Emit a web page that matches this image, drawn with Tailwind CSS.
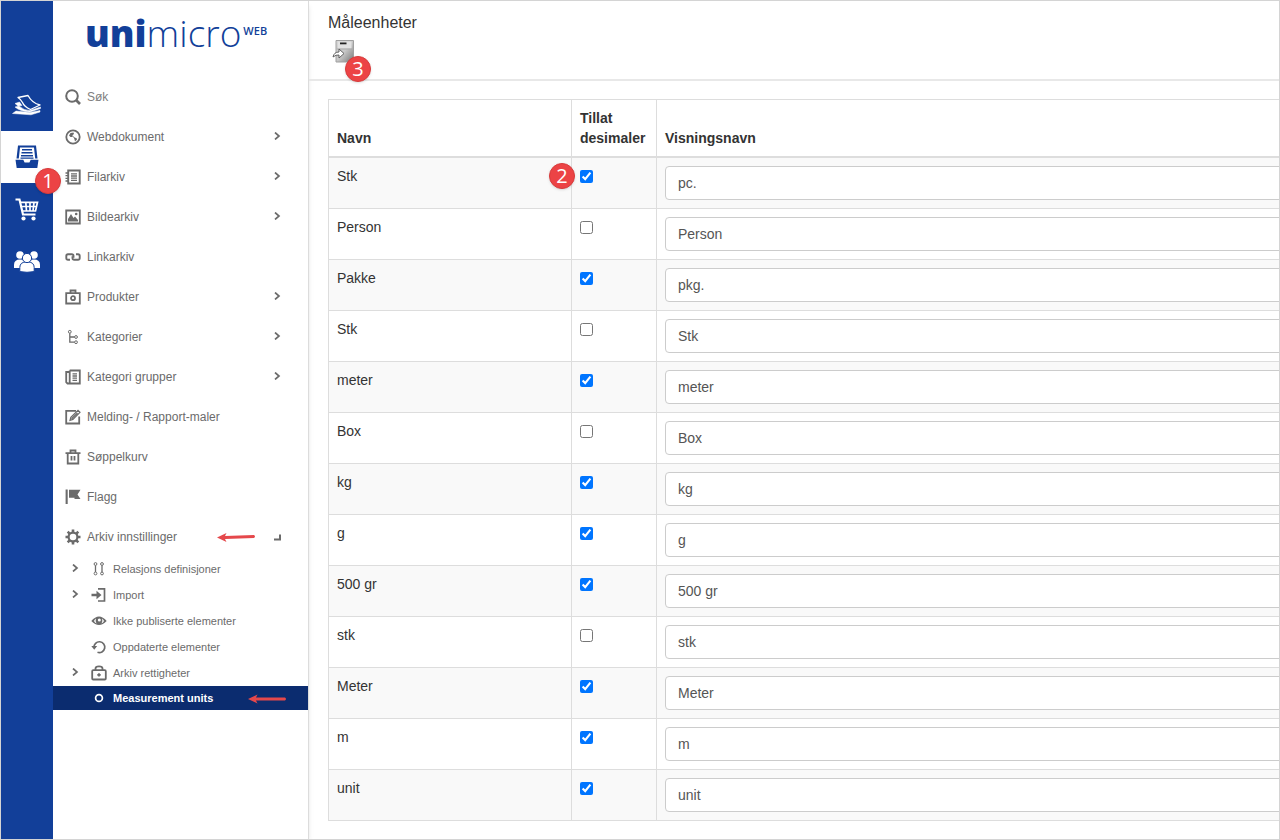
<!DOCTYPE html>
<html lang="no">
<head>
<meta charset="utf-8">
<meta name="viewport" content="width=device-width, initial-scale=1">
<title>Måleenheter</title>
<script src="https://cdn.jsdelivr.net/npm/@tailwindcss/browser@4"></script>
</head>
<body class="bg-white font-['Liberation_Sans',Arial,sans-serif] text-[#333]">
<div class="flex h-screen overflow-hidden border border-[#d4d4d4]">

  <!-- Module rail -->
  <nav class="relative z-10 flex w-13 shrink-0 flex-col bg-[#123f99] pt-[78px] text-white" aria-label="Moduler">
    <a href="#" aria-label="Sider" class="flex h-13 items-center justify-center">
      <svg class="size-8" viewBox="0 0 32 32" fill="none" stroke="currentColor" stroke-width="1.3" stroke-linejoin="round">
        <path d="M1.500 24.500 5 22 19 23.500 29 21.500V23L20 25.800Z" fill="currentColor" stroke-width=".5"/>
        <path d="M4 18 8 17Q13 21.500 19 21.500L29.500 18V19.500L19 23Q9 22.500 4 18Z" fill="currentColor" stroke-width=".5"/>
        <path d="M4 14.500 8.500 13 11 16.500 7 17Z" fill="currentColor" stroke-width=".5"/>
        <path d="M7 8.500 17 6.500Q21 14 29 16L19.500 20.500Q13 17.500 11.500 13.500 10 10.500 7 8.500Z"/>
      </svg>
    </a>
    <a href="#" aria-label="Arkiv" class="relative flex h-13 items-center justify-center bg-white text-[#123f99]">
      <svg class="size-8" viewBox="0 0 32 32" fill="currentColor">
        <path d="M7 4.500h18l1.500 13h-2.300L23 6.500H9L7.800 17.500H5.500Z"/>
        <path d="M11 8h10v1.600H11zM10.500 11h11v1.600h-11zM10 13.900h12v1.600H10zM9.500 16.600h13v1.200h-13z"/>
        <path d="M4.500 18.800h7.800l1.300 2.700h4.800l1.300-2.700h7.800L26.300 27H5.700Z"/>
      </svg>
      <span class="absolute top-[37px] left-[34px] flex size-[26px] items-center justify-center rounded-full border border-[#d83a3a] bg-[#ec4345] font-['Open_Sans',sans-serif] text-xl leading-none text-white shadow">1</span>
    </a>
    <a href="#" aria-label="Handel" class="flex h-13 items-center justify-center">
      <svg class="size-8" viewBox="0 0 32 32" fill="none" stroke="currentColor">
        <path d="M4.500 6.500H8.500L12 21.500H24.500" stroke-width="2.200"/>
        <path d="M9.500 9.300H26.500L24.500 18H11.500M10.500 13.500H25.500M14.800 9.500 15.500 18M19 9.500V18M23 9.500 22 18" stroke-width="1.700"/>
        <circle cx="12.500" cy="25.500" r="2.100" fill="currentColor" stroke="none"/>
        <circle cx="22.500" cy="25.500" r="2.100" fill="currentColor" stroke="none"/>
      </svg>
    </a>
    <a href="#" aria-label="Brukere" class="flex h-13 items-center justify-center">
      <svg class="size-8" viewBox="0 0 32 32" fill="currentColor">
        <circle cx="9" cy="10" r="3.800"/><path d="M3 23v-3q0-5.500 6-5.500t6 5.500v3Z"/>
        <circle cx="23" cy="10" r="3.800"/><path d="M17 23v-3q0-5.500 6-5.500t6 5.500v3Z"/>
        <g stroke="#123f99" stroke-width="1"><path d="M8.800 26.600v-4q0-5.800 7.200-5.800t7.200 5.800v4Q16 28 8.800 26.600Z"/><circle cx="16" cy="13" r="4.600"/></g>
      </svg>
    </a>
  </nav>

  <!-- Sidebar -->
  <aside class="flex w-64 shrink-0 flex-col border-r border-[#dcdcdc] text-xs text-[#6b6b6b] shadow-md">
    <div class="flex h-[75px] items-start pt-1.5 pl-8 font-['Open_Sans',sans-serif] text-[#123f99]">
      <span class="text-[37px] leading-[52px] font-extrabold">uni</span><span class="text-[37px] leading-[52px] font-light">micro</span><span class="ml-0.5 pt-4 text-[11px] leading-4 font-semibold">WEB</span>
    </div>
    <nav aria-label="Arkiv">
      <label class="flex h-[41px] items-center gap-1.5 pl-3">
        <svg class="size-4 shrink-0" viewBox="0 0 16 16" fill="none" stroke="currentColor"><circle cx="7" cy="7" r="5.800" stroke-width="2"/><path d="M11 11l4 4" stroke-width="2.600"/></svg>
        <input type="text" placeholder="Søk" aria-label="Søk" class="w-40 bg-transparent outline-none placeholder:text-[#808080]">
      </label>
      <a href="#" class="flex h-10 items-center gap-1.5 pr-[27px] pl-3">
        <svg class="size-4" viewBox="0 0 16 16" fill="none" stroke="currentColor"><circle cx="8" cy="8" r="6.700" stroke-width="1.800"/><path d="M4 6.500 5.500 4 8.500 3.500 9 5 7 6.500 7.500 8 5.500 8ZM9 8.500 11.500 9 12 10.500 10 12.500 9.500 10.500Z" fill="currentColor" stroke="none"/><path d="M6.500 6 10.500 10" /></svg>
        Webdokument<svg class="mb-0.5 ml-auto size-2" viewBox="0 0 8 8" fill="none" stroke="currentColor" stroke-width="1.700"><path d="M2 .5 6 4 2 7.500"/></svg>
      </a>
      <a href="#" class="flex h-10 items-center gap-1.5 pr-[27px] pl-3">
        <svg class="size-4" viewBox="0 0 16 16" fill="none" stroke="currentColor" stroke-width="1.300"><path d="M3.200 1.500H14.700V14.500H3.200Z" stroke-width="1.900"/><path d="M.5 4H4M.5 6.700H4M.5 9.400H4M.5 12H4M6 4.800h6M6 7h6M6 9.200h6M6 11.400h6"/></svg>
        Filarkiv<svg class="mb-0.5 ml-auto size-2" viewBox="0 0 8 8" fill="none" stroke="currentColor" stroke-width="1.700"><path d="M2 .5 6 4 2 7.500"/></svg>
      </a>
      <a href="#" class="flex h-10 items-center gap-1.5 pr-[27px] pl-3">
        <svg class="size-4" viewBox="0 0 16 16" fill="none" stroke="currentColor" stroke-width="1.800"><path d="M1.200 1.500H14.800V14.500H1.200Z"/><path d="M3 12.500V10L6 5 8.500 9 10 7.500 13 11V12.500Z" fill="currentColor" stroke="none"/><circle cx="11.200" cy="5" r="1.300" fill="currentColor" stroke="none"/></svg>
        Bildearkiv<svg class="mb-0.5 ml-auto size-2" viewBox="0 0 8 8" fill="none" stroke="currentColor" stroke-width="1.700"><path d="M2 .5 6 4 2 7.500"/></svg>
      </a>
      <a href="#" class="flex h-10 items-center gap-1.5 pr-[27px] pl-3">
        <svg class="size-4" viewBox="0 0 16 16" fill="none" stroke="currentColor" stroke-width="1.900"><path d="M5 10.800H3Q1.300 10.800 1.300 9V7Q1.300 5.200 3 5.200H6.700Q8.500 5.200 8.500 7V8.800M11 5.200H13Q14.700 5.200 14.700 7V9Q14.700 10.800 13 10.800H9.300Q7.500 10.800 7.500 9V7.200"/></svg>
        Linkarkiv
      </a>
      <a href="#" class="flex h-10 items-center gap-1.5 pr-[27px] pl-3">
        <svg class="size-4" viewBox="0 0 16 16" fill="none" stroke="currentColor" stroke-width="1.800"><path d="M1.200 4.200H14.800V14.500H1.200ZM5.500 4V1.500H10.500V4"/><circle cx="8" cy="9.200" r="2"/></svg>
        Produkter<svg class="mb-0.5 ml-auto size-2" viewBox="0 0 8 8" fill="none" stroke="currentColor" stroke-width="1.700"><path d="M2 .5 6 4 2 7.500"/></svg>
      </a>
      <a href="#" class="flex h-10 items-center gap-1.5 pr-[27px] pl-3">
        <svg class="size-4" viewBox="0 0 16 16" fill="none" stroke="currentColor"><circle cx="4.800" cy="2.800" r="1.400"/><path d="M4.800 4.200V13.200H9.500M4.800 8H9.500" stroke-width="1.300"/><circle cx="11" cy="8" r="1.400"/><circle cx="11" cy="13.200" r="1.400"/></svg>
        Kategorier<svg class="mb-0.5 ml-auto size-2" viewBox="0 0 8 8" fill="none" stroke="currentColor" stroke-width="1.700"><path d="M2 .5 6 4 2 7.500"/></svg>
      </a>
      <a href="#" class="flex h-10 items-center gap-1.5 pr-[27px] pl-3">
        <svg class="size-4" viewBox="0 0 16 16" fill="none" stroke="currentColor" stroke-width="1.800"><path d="M4.700 1.500H14.800V14.500H2.500L1.200 13.200V3H4.500M4.700 1.500V14.500"/><path d="M7.500 4.800h4.500M7.500 7h4.500M7.500 9.200h4.500M7.500 11.400h4.500" stroke-width="1.300"/></svg>
        Kategori grupper<svg class="mb-0.5 ml-auto size-2" viewBox="0 0 8 8" fill="none" stroke="currentColor" stroke-width="1.700"><path d="M2 .5 6 4 2 7.500"/></svg>
      </a>
      <a href="#" class="flex h-10 items-center gap-1.5 pr-[27px] pl-3">
        <svg class="size-4" viewBox="0 0 16 16" fill="none" stroke="currentColor" stroke-width="1.800"><path d="M11 1.800H1.200V14.500H14.200V7.500"/><path d="M5 11.300 5.800 8.200 13 1.300 15 3.300 7.900 10.400ZM6.500 9.800 12.500 4" stroke-width="1.200"/></svg>
        Melding- / Rapport-maler
      </a>
      <a href="#" class="flex h-10 items-center gap-1.5 pr-[27px] pl-3">
        <svg class="size-4" viewBox="0 0 16 16" fill="none" stroke="currentColor" stroke-width="1.800"><path d="M.5 4.200H15.500M2.700 4.200V14.500H13.300V4.200M5.500 4V1.500H10.500V4M6.500 7V11.500M9.500 7V11.500"/></svg>
        Søppelkurv
      </a>
      <a href="#" class="flex h-10 items-center gap-1.5 pr-[27px] pl-3">
        <svg class="size-4" viewBox="0 0 16 16" fill="currentColor"><path d="M.6.500H2.700V15H.6ZM4 .8H15.500L12.500 5.500 15.500 10H9.500V8.800H4Z"/></svg>
        Flagg
      </a>
      <a href="#" class="flex h-[39px] items-center gap-1.5 pr-[27px] pl-3">
        <svg class="size-4" viewBox="0 0 16 16" fill="none" stroke="currentColor"><circle cx="8" cy="8" r="4.400" stroke-width="2.200"/><path d="M8 .5V3.500M8 12.500V15.500M.5 8H3.500M12.500 8H15.500M2.700 2.700 4.800 4.800M11.200 11.200 13.300 13.300M2.700 13.300 4.800 11.200M11.200 4.800 13.300 2.700" stroke-width="2.600"/></svg>
        Arkiv innstillinger
        <svg class="mr-3 ml-auto h-3 w-[38px]" viewBox="0 0 38 12" fill="#e5484b" aria-hidden="true"><path d="M0 6.500 9.500 2 8 5 37 4Q39 5.500 37 7L8 8 9.500 11Z"/></svg>
        <svg class="size-2" viewBox="0 0 8 8" fill="none" stroke="currentColor" stroke-width="2"><path d="M7 1.500V6.500H1"/></svg>
      </a>
    </nav>
    <nav aria-label="Arkiv innstillinger" class="text-[11px]">
      <a href="#" class="flex h-[26px] items-center pl-[18px]">
        <svg class="mr-3 mb-0.5 size-2" viewBox="0 0 8 8" fill="none" stroke="currentColor" stroke-width="1.700"><path d="M2 .5 6 4 2 7.500"/></svg>
        <svg class="mr-1.5 size-4" viewBox="0 0 16 16" fill="none" stroke="currentColor"><circle cx="4.500" cy="3" r="1.400"/><circle cx="11" cy="3" r="1.400"/><circle cx="4.500" cy="12.500" r="1.400"/><circle cx="11" cy="12.500" r="1.400"/><path d="M4.500 4.500V11M11 4.500V11" stroke-width="1.300"/></svg>
        Relasjons definisjoner
      </a>
      <a href="#" class="flex h-[26px] items-center pl-[18px]">
        <svg class="mr-3 mb-0.5 size-2" viewBox="0 0 8 8" fill="none" stroke="currentColor" stroke-width="1.700"><path d="M2 .5 6 4 2 7.500"/></svg>
        <svg class="mr-1.5 size-4" viewBox="0 0 16 16" fill="none" stroke="currentColor" stroke-width="1.700"><path d="M7 1.800H13.500V14H7"/><path d="M.5 6.800H5.500V3.800L10.500 8 5.500 12.200V9.200H.5Z" fill="currentColor" stroke="none"/></svg>
        Import
      </a>
      <a href="#" class="flex h-[26px] items-center pl-[38px]">
        <svg class="mr-1.5 size-4" viewBox="0 0 16 16"><path d="M.3 8Q8-1 15.700 8 8 16 .3 8Z" fill="currentColor"/><path d="M3 8Q3.500 6.500 5 5.500 4 8 5.500 10.500 3.800 9.500 3 8ZM13 8Q12.500 6.500 11 5.500 12 8 10.500 10.500 12.200 9.500 13 8Z" fill="white"/><circle cx="8.300" cy="7" r="1.500" fill="white"/></svg>
        Ikke publiserte elementer
      </a>
      <a href="#" class="flex h-[26px] items-center pl-[38px]">
        <svg class="mr-1.5 size-4" viewBox="0 0 16 16" fill="none" stroke="currentColor" stroke-width="1.700"><path d="M3 8.500A5.400 5.400 0 1 1 6.500 13.200"/><path d="M.3 7H6.200L3.200 10.800Z" fill="currentColor" stroke="none"/></svg>
        Oppdaterte elementer
      </a>
      <a href="#" class="flex h-[26px] items-center pl-[18px]">
        <svg class="mr-3 mb-0.5 size-2" viewBox="0 0 8 8" fill="none" stroke="currentColor" stroke-width="1.700"><path d="M2 .5 6 4 2 7.500"/></svg>
        <svg class="mr-1.5 size-4" viewBox="0 0 16 16" fill="none" stroke="currentColor" stroke-width="1.800"><rect x="1.200" y="5.200" width="13.600" height="9.300" rx="1"/><path d="M4.500 5V3.500Q4.500 1.300 8 1.300T11.500 3.500V5"/><path d="M8 8.200V11.600M6.300 9.900H9.700" stroke-width="1.700"/></svg>
        Arkiv rettigheter
      </a>
      <a href="#" aria-current="page" class="flex h-6 items-center bg-[#0b2c6f] pr-[22px] pl-[38px] font-bold text-white">
        <svg class="mr-1.5 size-4" viewBox="0 0 16 16" fill="none" stroke="currentColor" stroke-width="1.700"><circle cx="8" cy="8" r="3.400"/></svg>
        Measurement units
        <svg class="ml-auto h-3 w-[38px]" viewBox="0 0 38 12" fill="#e5484b" aria-hidden="true"><path d="M0 7 9.500 2.500 8 5.600 37 5.600Q39 7 37 8.400L8 8.400 9.500 11.500Z"/></svg>
      </a>
    </nav>
  </aside>

  <!-- Content -->
  <main class="min-w-0 flex-1 overflow-hidden">
    <header class="h-20 border-b-2 border-[#e8e8e8] px-[19px] pt-2.5">
      <h1 class="text-base leading-6">Måleenheter</h1>
      <button type="button" aria-label="Lagre" class="relative mt-1 ml-1 block size-6">
        <svg class="size-6" viewBox="0 0 24 24">
          <defs><linearGradient id="cabinet" x1="0" y1="0" x2="1" y2="1"><stop offset="0" stop-color="#d8d8d8"/><stop offset=".5" stop-color="#c8c8c8"/><stop offset="1" stop-color="#777"/></linearGradient></defs>
          <path d="M4 1.500H21.500V23H4Z" fill="url(#cabinet)" stroke="#a0a0a0"/>
          <path d="M6 2.500H19.500V9.500H6Z" fill="#e2e2e2"/>
          <path d="M8 3.500H14.500V5.300H8Z" fill="#222"/>
          <path d="M5 10H20.500" stroke="#aaa"/>
          <path d="M1 18Q2 13 7 13V10L12 14.500 7 19V16Q4 15.500 1 18Z" fill="#fff" stroke="#555" stroke-width=".9"/>
        </svg>
        <span class="absolute top-[17px] left-[13px] flex size-[26px] items-center justify-center rounded-full border border-[#d83a3a] bg-[#ec4345] font-['Open_Sans',sans-serif] text-xl leading-none text-white shadow">3</span>
      </button>
    </header>
    <div class="overflow-hidden pt-[18px] pl-[19px]">
      <table class="w-[130%] table-fixed border-separate border-spacing-0 border-t border-[#ddd] text-sm">
        <colgroup><col class="w-[243px]"><col class="w-[85px]"><col></colgroup>
        <thead>
          <tr class="text-left align-bottom">
            <th scope="col" class="border-b-2 border-l border-[#ddd] p-2">Navn</th>
            <th scope="col" class="border-b-2 border-l border-[#ddd] p-2">Tillat desimaler</th>
            <th scope="col" class="border-b-2 border-l border-[#ddd] p-2">Visningsnavn</th>
          </tr>
        </thead>
        <tbody id="units"></tbody>
      </table>
    </div>
  </main>
</div>
<script>
  const units = [
    ["Stk", true, "pc."], ["Person", false, "Person"], ["Pakke", true, "pkg."],
    ["Stk", false, "Stk"], ["meter", true, "meter"], ["Box", false, "Box"],
    ["kg", true, "kg"], ["g", true, "g"], ["500 gr", true, "500 gr"],
    ["stk", false, "stk"], ["Meter", true, "Meter"], ["m", true, "m"], ["unit", true, "unit"]
  ];
  const marker = `<span class="absolute top-[5px] left-[-23px] flex size-[26px] items-center justify-center rounded-full border border-[#d83a3a] bg-[#ec4345] font-['Open_Sans',sans-serif] text-xl leading-none text-white shadow">2</span>`;
  document.getElementById("units").innerHTML = units.map(([name, decimals, label], i) => `
    <tr class="align-top odd:bg-[#f9f9f9]">
      <td class="border-b border-l border-[#ddd] p-2">${name}</td>
      <td class="relative border-b border-l border-[#ddd] p-2">
        <input type="checkbox" aria-label="Tillat desimaler: ${name}" class="mt-1 block size-[13px]" ${decimals ? "checked" : ""}>
        ${i === 0 ? marker : ""}
      </td>
      <td class="border-b border-l border-[#ddd] p-2">
        <input type="text" aria-label="Visningsnavn: ${name}" value="${label}" class="block h-[34px] w-full rounded border border-[#ccc] bg-white px-3 text-sm text-[#555]">
      </td>
    </tr>`).join("");
</script>
</body>
</html>
